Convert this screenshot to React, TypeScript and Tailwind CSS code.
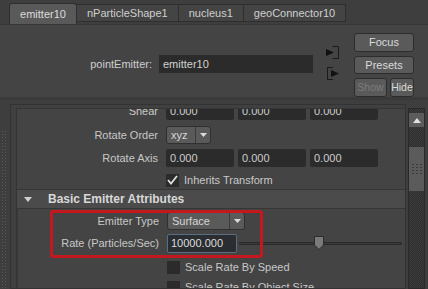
import type { ReactNode } from "react";

const font = { fontFamily: '"Liberation Sans", Arial, sans-serif' };

function Tab({ label, active }: { label: string; active?: boolean }) {
  if (active) {
    return (
      <div className="flex h-[21px] w-[68px] items-center justify-center rounded-t-[3px] border border-b-0 border-[#2e2e2e] bg-[#595959] text-[11px] text-[#dcdcdc]">
        {label}
      </div>
    );
  }
  return (
    <div className="mb-[2px] flex h-[18px] items-center border border-l-0 border-[#2e2e2e] bg-[#444] px-[10px] text-[11px] text-[#cfcfcf]">
      {label}
    </div>
  );
}

function Btn({ children, w, disabled }: { children: ReactNode; w: string; disabled?: boolean }) {
  return (
    <div
      className={`flex h-[19px] ${w} items-center justify-center rounded-[3px] border border-[#2c2c2c] bg-[#5a5a5a] ${
        disabled ? "text-[#7c7c7c]" : "text-[#dadada]"
      }`}
    >
      {children}
    </div>
  );
}

function Field({ value, w = "w-[68px]" }: { value: string; w?: string }) {
  return (
    <div className={`flex h-[18px] ${w} items-center rounded-[2px] bg-[#2b2b2b] pl-[4px] text-[11px] text-[#cccccc]`}>
      {value}
    </div>
  );
}

function Label({ children }: { children: ReactNode }) {
  return <div className="w-[141px] shrink-0 text-right text-[11px] text-[#c8c8c8]">{children}</div>;
}

function Dropdown({ value, w }: { value: string; w: string }) {
  return (
    <div className={`flex h-[18px] ${w} items-stretch overflow-hidden rounded-[3px] border border-[#303030] bg-[#5a5a5a] text-[11px] text-[#d6d6d6]`}>
      <div className="flex flex-1 items-center pl-[4px]">{value}</div>
      <div className="flex w-[15px] items-center justify-center border-l border-[#3a3a3a]">
        <svg width="7" height="4" viewBox="0 0 7 4">
          <path d="M0 0 L7 0 L3.5 4 Z" fill="#dcdcdc" />
        </svg>
      </div>
    </div>
  );
}

function Check({ checked, label }: { checked?: boolean; label: string }) {
  return (
    <div className="flex items-center gap-[5px] pl-[149px] text-[11px] text-[#c8c8c8]">
      <div className="flex h-[13px] w-[13px] items-center justify-center bg-[#2b2b2b]">
        {checked && (
          <svg width="11" height="10" viewBox="0 0 11 10">
            <path d="M1 5 L4 8.5 L10 1" stroke="#e0e0e0" strokeWidth="1.8" fill="none" />
          </svg>
        )}
      </div>
      <span>{label}</span>
    </div>
  );
}

export default function App() {
  return (
    <div style={font} className="relative h-[289px] w-[428px] overflow-hidden bg-[#444444]">
      {/* tabs */}
      <div className="flex h-[25px] items-end border-b border-[#363636] bg-[#3e3e3e] pl-[9px]">
        <Tab label="emitter10" active />
        <Tab label="nParticleShape1" />
        <Tab label="nucleus1" />
        <Tab label="geoConnector10" />
      </div>

      {/* header */}
      <div className="flex h-[75px] border-b-[3px] border-[#3a3a3a] pr-[14px]">
        <div className="flex flex-1 items-start pt-[30px]">
          <div className="flex items-center">
            <span className="w-[152px] text-right text-[11px] text-[#cfcfcf]">pointEmitter:</span>
            <div className="ml-[7px] flex h-[18px] w-[154px] items-center bg-[#2b2b2b] pl-[4px] text-[11px] text-[#d2d2d2]">
              emitter10
            </div>
          </div>
        </div>
        <div className="mr-[14px] flex flex-col gap-[8px] pt-[21px]">
          <svg width="15" height="13" viewBox="0 0 15 13">
            <path d="M7.5 0.5 H13.5 V12.5 H7.5" stroke="#1a1a1a" strokeWidth="1" fill="none" />
            <path d="M1 3 L9 6.5 L1 10 Z" fill="#111" />
          </svg>
          <svg width="15" height="13" viewBox="0 0 15 13">
            <path d="M8 0.5 H2.5 V12.5 H8" stroke="#1a1a1a" strokeWidth="1" fill="none" />
            <path d="M6 3 L14 6.5 L6 10 Z" fill="#111" />
          </svg>
        </div>
        <div className="flex flex-col gap-[4px] pt-[8px] text-[11px]">
          <Btn w="w-[60px]">Focus</Btn>
          <Btn w="w-[60px]">Presets</Btn>
          <div className="flex gap-[3px] text-[10.5px]">
            <Btn w="w-[33px]" disabled>
              Show
            </Btn>
            <Btn w="w-[24px]">Hide</Btn>
          </div>
        </div>
      </div>

      {/* body */}
      <div className="flex h-[189px] bg-[#3e3e3e]">
        <div className="w-[10px] shrink-0 pl-[1px] pt-[30px]">
          <div className="h-full w-[5px] bg-[radial-gradient(#5a5a5a_30%,transparent_35%)] bg-size-[3px_3px]" />
        </div>
        <div className="mt-[4px] flex-1 overflow-hidden border border-[#333] bg-[#404040] pl-[5px] pt-[3px]">
          <div className="h-full overflow-hidden border-l border-t border-[#353535] bg-[#444]">
            <div className="-mt-[7px] flex flex-col">
              <div className="flex h-[18px] items-center gap-[8px]">
                <Label>Shear</Label>
                <div className="flex gap-[4px]">
                  <Field value="0.000" />
                  <Field value="0.000" />
                  <Field value="0.000" />
                </div>
              </div>
              <div className="mt-[6px] flex h-[18px] items-center gap-[8px]">
                <Label>Rotate Order</Label>
                <Dropdown value="xyz" w="w-[45px]" />
              </div>
              <div className="mt-[5px] flex h-[18px] items-center gap-[8px]">
                <Label>Rotate Axis</Label>
                <div className="flex gap-[4px]">
                  <Field value="0.000" />
                  <Field value="0.000" />
                  <Field value="0.000" />
                </div>
              </div>
              <div className="mt-[5px] h-[14px]">
                <Check checked label="Inherits Transform" />
              </div>
              <div className="mt-[3px] flex h-[20px] items-center border-y border-[#363636] bg-[#4b4b4b] pl-[7px]">
                <svg width="8" height="5" viewBox="0 0 8 5">
                  <path d="M0 0 L8 0 L4 5 Z" fill="#d0d0d0" />
                </svg>
                <span className="ml-[16px] text-[12px] font-bold text-[#d8d8d8]">Basic Emitter Attributes</span>
              </div>
              <div className="border-l border-[#383838]">
                <div className="mt-[3px] flex h-[18px] items-center gap-[8px]">
                  <Label>Emitter Type</Label>
                  <Dropdown value="Surface" w="w-[78px]" />
                </div>
                <div className="mt-[4px] flex h-[19px] items-center gap-[8px]">
                  <Label>Rate (Particles/Sec)</Label>
                  <div className="flex h-[19px] w-[70px] items-center rounded-[2px] border border-[#5b6d80] bg-[#2a2d31] pl-[3px] text-[11px] text-[#dcdcdc]">
                    10000.000
                  </div>
                  <div className="relative -ml-[6px] flex h-[19px] w-[163px] items-center">
                    <div className="h-[3px] w-full rounded-[1px] border border-[#2a2a2a] bg-[#3a3a3a]" />
                    <svg className="absolute left-[75px] top-[2px]" width="10" height="14" viewBox="0 0 10 14">
                      <path d="M0.5 0.5 H9.5 V9 L5 13.5 L0.5 9 Z" fill="#7a7a7a" stroke="#2c2c2c" />
                    </svg>
                  </div>
                </div>
                <div className="mt-[6px] h-[14px]">
                  <Check label="Scale Rate By Speed" />
                </div>
                <div className="mt-[6px] h-[14px]">
                  <Check label="Scale Rate By Object Size" />
                </div>
              </div>
            </div>
          </div>
        </div>
        {/* scrollbar */}
        <div className="ml-[2px] mr-[3px] mt-[8px] flex w-[17px] shrink-0 flex-col border border-[#2a2a2a] bg-[repeating-conic-gradient(#2c2c2c_0%_25%,#3e3e3e_0%_50%)] bg-size-[2px_2px]">
          <div className="mt-[4px] flex h-[14px] items-center justify-center bg-[#5c5c5c]">
            <svg width="8" height="5" viewBox="0 0 8 5">
              <path d="M0 5 L8 5 L4 0 Z" fill="#e0e0e0" />
            </svg>
          </div>
          <div className="mt-[20px] flex h-[44px] items-center justify-center bg-[#5b5b5b]">
            <div className="grid grid-cols-3 gap-[2px]">
              {Array.from({ length: 12 }).map((_, i) => (
                <div key={i} className="h-[1px] w-[2px] bg-[#3a3a3a]" />
              ))}
            </div>
          </div>
        </div>
      </div>

      {/* red highlight */}
      <div className="pointer-events-none absolute left-[50px] top-[210px] h-[48px] w-[213px] rounded-[3px] border-[3px] border-[#c4171e]" />
    </div>
  );
}
